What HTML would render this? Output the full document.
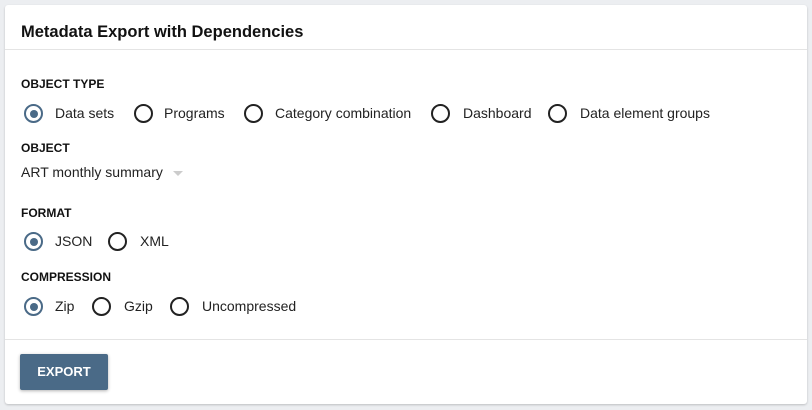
<!DOCTYPE html>
<html><head><style>
body{margin:0;width:812px;height:410px;background:#eceef1;font-family:"Liberation Sans",Arial,sans-serif;color:#111;position:relative;overflow:hidden}
.card{position:absolute;left:5px;top:5px;width:802px;height:399px;background:#fff;border-radius:3px;box-shadow:0 1px 2px rgba(0,0,0,.2)}
.a{position:absolute;white-space:nowrap}
.t{font-size:16.5px;font-weight:bold;top:18px;left:16px;color:#111}
.hr{position:absolute;left:0;right:0;height:1px;background:#e4e4e4}
.l{font-size:12px;font-weight:bold}
.o{font-size:14px;color:#222}
.r{position:absolute;border:2px solid #222;border-radius:50%;box-sizing:border-box;width:19px;height:19px}
.r.on{border-color:#4a6a87}
.r.on:after{content:"";position:absolute;left:3.5px;top:3.5px;width:8px;height:8px;border-radius:50%;background:#4a6a87}
.btn{position:absolute;left:15px;top:349px;width:88px;height:36px;background:#4a6a87;border-radius:2px;color:#fff;font-weight:bold;font-size:13px;text-align:center;line-height:36px;box-shadow:0 1px 3px rgba(0,0,0,.3)}
</style></head><body>
<div class="card">
<div class="a t">Metadata Export with Dependencies</div>
<div class="hr" style="top:44px"></div>
<div class="a l" style="left:16px;top:72px">OBJECT TYPE</div>
<div class="r on" style="left:19px;top:99px"></div><div class="a o" style="left:50px;top:100px">Data sets</div>
<div class="r" style="left:129px;top:99px"></div><div class="a o" style="left:159px;top:100px">Programs</div>
<div class="r" style="left:239px;top:99px"></div><div class="a o" style="left:270px;top:100px">Category combination</div>
<div class="r" style="left:426px;top:99px"></div><div class="a o" style="left:458px;top:100px">Dashboard</div>
<div class="r" style="left:543px;top:99px"></div><div class="a o" style="left:575px;top:100px">Data element groups</div>
<div class="a l" style="left:16px;top:136px">OBJECT</div>
<div class="a o" style="left:16px;top:159px">ART monthly summary</div>
<div class="a" style="left:168px;top:166px;width:0;height:0;border-left:5px solid transparent;border-right:5px solid transparent;border-top:5px solid #ccc"></div>
<div class="a l" style="left:16px;top:201px">FORMAT</div>
<div class="r on" style="left:19px;top:227px"></div><div class="a o" style="left:50px;top:228px">JSON</div>
<div class="r" style="left:103px;top:227px"></div><div class="a o" style="left:135px;top:228px">XML</div>
<div class="a l" style="left:16px;top:265px">COMPRESSION</div>
<div class="r on" style="left:19px;top:292px"></div><div class="a o" style="left:50px;top:293px">Zip</div>
<div class="r" style="left:87px;top:292px"></div><div class="a o" style="left:119px;top:293px">Gzip</div>
<div class="r" style="left:165px;top:292px"></div><div class="a o" style="left:197px;top:293px">Uncompressed</div>
<div class="hr" style="top:334px"></div>
<div class="btn">EXPORT</div>
</div>
</body></html>
